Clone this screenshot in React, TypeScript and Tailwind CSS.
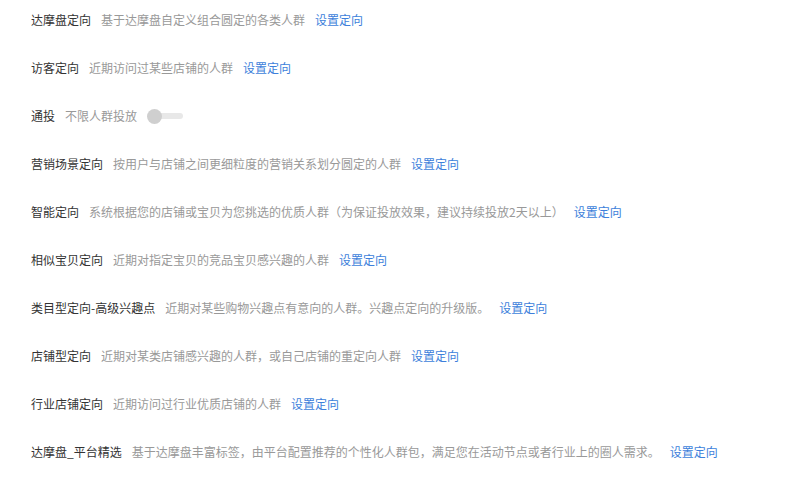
const rows = [
  { title: "达摩盘定向", desc: "基于达摩盘自定义组合圆定的各类人群", link: true },
  { title: "访客定向", desc: "近期访问过某些店铺的人群", link: true },
  { title: "通投", desc: "不限人群投放", toggle: true },
  { title: "营销场景定向", desc: "按用户与店铺之间更细粒度的营销关系划分圆定的人群", link: true },
  { title: "智能定向", desc: "系统根据您的店铺或宝贝为您挑选的优质人群（为保证投放效果，建议持续投放2天以上）", link: true },
  { title: "相似宝贝定向", desc: "近期对指定宝贝的竞品宝贝感兴趣的人群", link: true },
  { title: "类目型定向-高级兴趣点", desc: "近期对某些购物兴趣点有意向的人群。兴趣点定向的升级版。", link: true },
  { title: "店铺型定向", desc: "近期对某类店铺感兴趣的人群，或自己店铺的重定向人群", link: true },
  { title: "行业店铺定向", desc: "近期访问过行业优质店铺的人群", link: true },
  { title: "达摩盘_平台精选", desc: "基于达摩盘丰富标签，由平台配置推荐的个性化人群包，满足您在活动节点或者行业上的圈人需求。", link: true },
];

export default function App() {
  return (
    <div
      className="w-[786px] h-[497px] bg-white pl-[31px] pt-[14px] flex flex-col gap-9 text-[12px] leading-[12px]"
      style={{ fontFamily: '"Noto Sans CJK SC", "Noto Sans", sans-serif' }}
    >
      {rows.map((r) => (
        <div key={r.title} className="flex items-center gap-[10px] h-[12px] whitespace-nowrap">
          <span className="text-[#333]">{r.title}</span>
          <span className="text-[#999]">{r.desc}</span>
          {r.link && <span className="text-[#3d7fdb] cursor-pointer">设置定向</span>}
          {r.toggle && (
            <div className="relative w-[36px] h-[15px] flex items-center">
              <div className="absolute left-[8px] right-0 h-[6px] rounded-full bg-[#e8e8e8]" />
              <div className="absolute left-0 w-[15px] h-[15px] rounded-full bg-[#cfcfcf]" />
            </div>
          )}
        </div>
      ))}
    </div>
  );
}
